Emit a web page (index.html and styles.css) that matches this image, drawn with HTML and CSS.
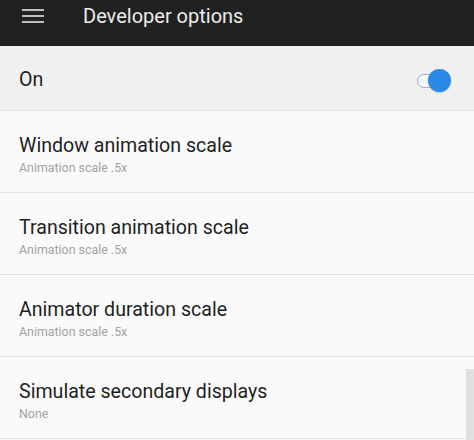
FILE: index.html
```html
<!DOCTYPE html>
<html>
<head>
<meta charset="utf-8">
<link rel="stylesheet" href="styles.css">
</head>
<body>
<div class="screen">
  <header class="appbar">
    <svg class="menu" width="22" height="16" viewBox="0 0 22 16">
      <rect x="0" y="1" width="22" height="2" fill="#bdbdbd"/>
      <rect x="0" y="7" width="22" height="2" fill="#bdbdbd"/>
      <rect x="0" y="13" width="22" height="2" fill="#bdbdbd"/>
    </svg>
    <div class="title">Developer options</div>
  </header>
  <div class="master">
    <span class="master-label">On</span>
    <div class="switch"><div class="track"></div><div class="thumb"></div></div>
  </div>
  <div class="list">
    <div class="item">
      <div class="item-title">Window animation scale</div>
      <div class="item-sub">Animation scale .5x</div>
    </div>
    <div class="item">
      <div class="item-title">Transition animation scale</div>
      <div class="item-sub">Animation scale .5x</div>
    </div>
    <div class="item">
      <div class="item-title">Animator duration scale</div>
      <div class="item-sub">Animation scale .5x</div>
    </div>
    <div class="item">
      <div class="item-title">Simulate secondary displays</div>
      <div class="item-sub">None</div>
    </div>
  </div>
  <div class="scrollbar"></div>
</div>
</body>
</html>
```

FILE: styles.css
```css
html, body {
  margin: 0;
  padding: 0;
  background: #fafafa;
}
.screen {
  position: relative;
  width: 474px;
  height: 440px;
  overflow: hidden;
  font-family: Roboto, "Noto Sans", sans-serif;
  background: #fafafa;
}
.appbar {
  height: 46px;
  background: #212121;
  display: flex;
  align-items: center;
  padding-left: 22px;
  box-sizing: border-box;
}
.menu {
  display: block;
  margin-top: -14px;
}
.title {
  margin-left: 39px;
  color: #ececec;
  font-size: 20px;
  line-height: 24px;
  margin-top: -14px;
}
.master {
  height: 64px;
  background: #f0f0f0;
  border-bottom: 1px solid #e2e2e2;
  display: flex;
  align-items: center;
  justify-content: space-between;
  padding: 0 22px 0 19px;
}
.master-label {
  font-size: 19.6px;
  line-height: 24px;
  color: #1f1f1f;
  margin-top: 4px;
}
.switch {
  position: relative;
  width: 36px;
  height: 24px;
  margin-top: 5px;
}
.track {
  position: absolute;
  left: 1px;
  top: 5px;
  width: 30px;
  height: 12px;
  border: 1.5px solid #9fb3c4;
  border-radius: 8px;
  background: #f4f6f8;
}
.thumb {
  position: absolute;
  left: 12px;
  top: 0;
  width: 23px;
  height: 23px;
  border-radius: 50%;
  background: #2a89e4;
  box-shadow: 0 1px 2px rgba(0,0,0,0.12);
}
.item {
  height: 82px;
  box-sizing: border-box;
  padding: 23px 19px 0;
  border-bottom: 1px solid #e4e4e4;
}
.item-title {
  font-size: 19.6px;
  line-height: 24px;
  color: #1f1f1f;
}
.item-sub {
  font-size: 12.4px;
  line-height: 16px;
  color: #a3a3a3;
  margin-top: 2px;
}
.scrollbar {
  position: absolute;
  right: 0;
  top: 369px;
  width: 8px;
  height: 71px;
  background: #e0e0e0;
}
```
